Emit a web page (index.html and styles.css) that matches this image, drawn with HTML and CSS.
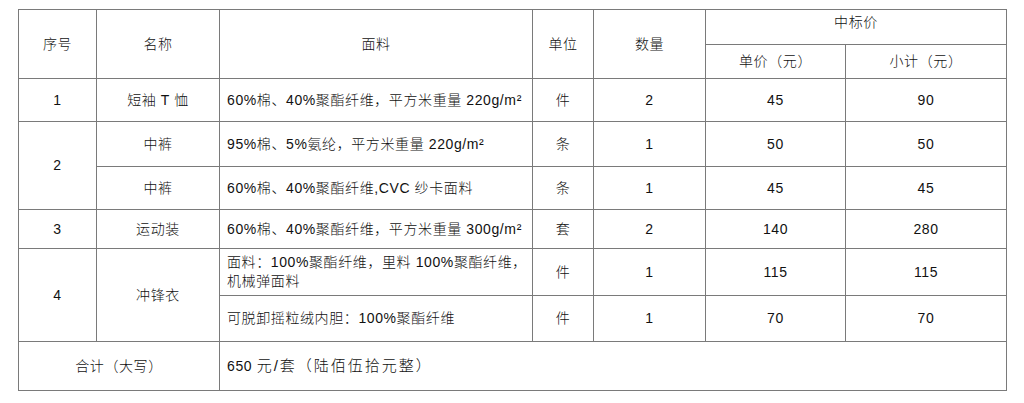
FILE: index.html
```html
<!DOCTYPE html>
<html lang="zh-CN">
<head>
<meta charset="utf-8">
<title>中标价</title>
<link rel="stylesheet" href="styles.css">
</head>
<body>
<table class="bid">
  <colgroup>
    <col class="c-no">
    <col class="c-name">
    <col class="c-fabric">
    <col class="c-unit">
    <col class="c-qty">
    <col class="c-price">
    <col class="c-sub">
  </colgroup>
  <thead>
    <tr class="h1">
      <th rowspan="2">序号</th>
      <th rowspan="2">名称</th>
      <th rowspan="2">面料</th>
      <th rowspan="2">单位</th>
      <th rowspan="2">数量</th>
      <th colspan="2" class="top">中标价</th>
    </tr>
    <tr class="h2">
      <th>单价（元）</th>
      <th>小计（元）</th>
    </tr>
  </thead>
  <tbody>
    <tr class="r1">
      <td>1</td>
      <td>短袖 T 恤</td>
      <td class="left">60%棉、40%聚酯纤维，平方米重量 220g/m²</td>
      <td>件</td>
      <td>2</td>
      <td>45</td>
      <td>90</td>
    </tr>
    <tr class="r2a">
      <td rowspan="2">2</td>
      <td>中裤</td>
      <td class="left">95%棉、5%氨纶，平方米重量 220g/m²</td>
      <td>条</td>
      <td>1</td>
      <td>50</td>
      <td>50</td>
    </tr>
    <tr class="r2b">
      <td>中裤</td>
      <td class="left">60%棉、40%聚酯纤维,CVC 纱卡面料</td>
      <td>条</td>
      <td>1</td>
      <td>45</td>
      <td>45</td>
    </tr>
    <tr class="r3">
      <td>3</td>
      <td>运动装</td>
      <td class="left">60%棉、40%聚酯纤维，平方米重量 300g/m²</td>
      <td>套</td>
      <td>2</td>
      <td>140</td>
      <td>280</td>
    </tr>
    <tr class="r4a">
      <td rowspan="2">4</td>
      <td rowspan="2">冲锋衣</td>
      <td class="left two">面料：100%聚酯纤维，里料 100%聚酯纤维，<br>机械弹面料</td>
      <td>件</td>
      <td>1</td>
      <td>115</td>
      <td>115</td>
    </tr>
    <tr class="r4b">
      <td class="left">可脱卸摇粒绒内胆：100%聚酯纤维</td>
      <td>件</td>
      <td>1</td>
      <td>70</td>
      <td>70</td>
    </tr>
    <tr class="total">
      <td colspan="2">合计（大写）</td>
      <td colspan="5" class="left">650 <span class="cn-wide">元/套（陆佰伍拾元整）</span></td>
    </tr>
  </tbody>
</table>
</body>
</html>
```

FILE: styles.css
```css
html, body {
  margin: 0;
  padding: 0;
  background: #ffffff;
}

body {
  font-family: "Liberation Sans", "Noto Sans CJK SC", sans-serif;
  font-size: 14px;
  color: #111111;
}

.bid {
  border-collapse: collapse;
  table-layout: fixed;
  width: 988px;
  margin: 9px 0 0 18px;
  letter-spacing: 0.6px;
  font-weight: 300;
}

.bid th,
.bid td {
  border: 1px solid #7a7a7a;
  padding: 0;
  text-align: center;
  vertical-align: middle;
  font-weight: 300;
  line-height: 19px;
}

.c-no { width: 78px; }
.c-name { width: 123px; }
.c-fabric { width: 313px; }
.c-unit { width: 61px; }
.c-qty { width: 112px; }
.c-price { width: 140px; }
.c-sub { width: 161px; }

.bid .left {
  text-align: left;
  padding-left: 7px;
}

.bid .top {
  vertical-align: top;
  padding-top: 3px;
}

.h1 { height: 35px; }
.h2 { height: 34px; }
.r1 { height: 43px; }
.r2a { height: 45px; }
.r2b { height: 43px; }
.r3 { height: 39px; }
.r4a { height: 47px; }
.r4b { height: 46px; }
.total { height: 49px; }

.total .left {
  font-size: 14px;
}

.cn-wide {
  font-size: 15px;
  letter-spacing: 2px;
}
```
